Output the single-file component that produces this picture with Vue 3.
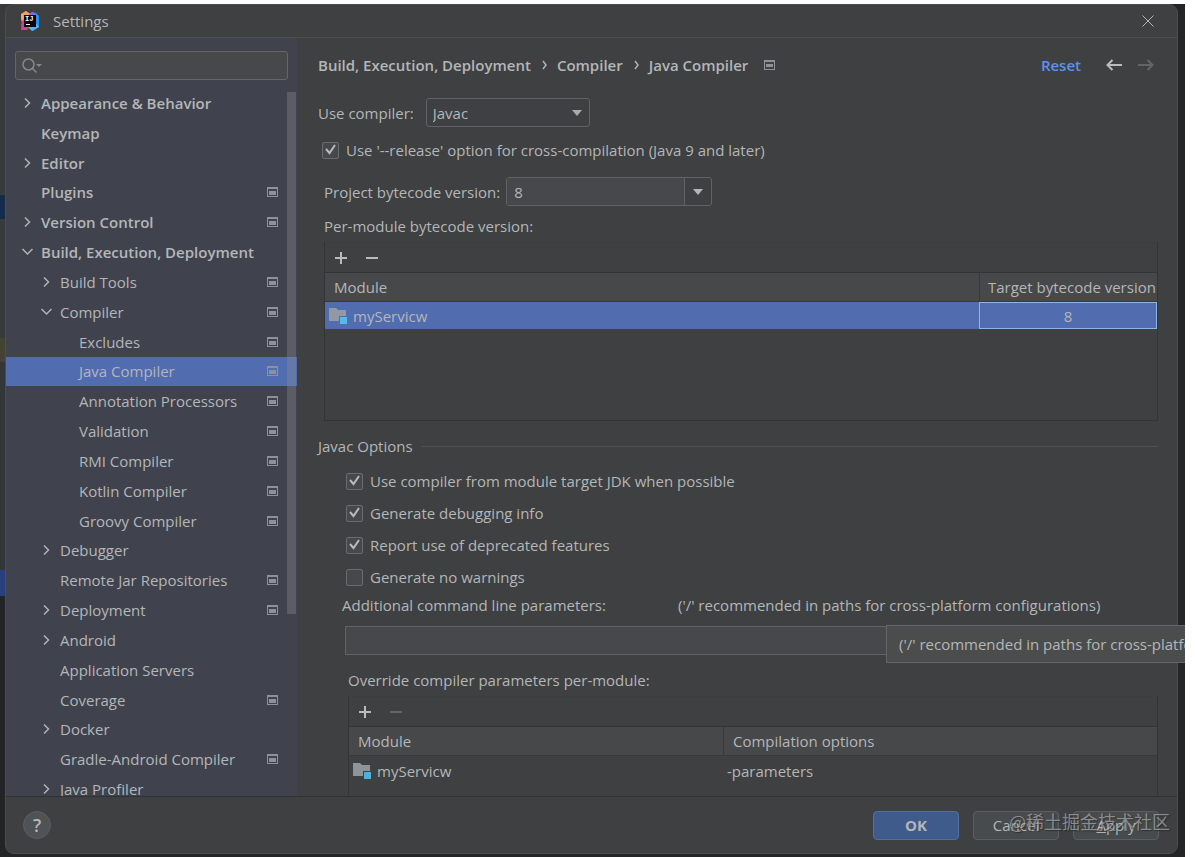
<script setup>
import { ref } from 'vue'

const tree = [
  { label: 'Appearance & Behavior', level: 0, arrow: 'right' },
  { label: 'Keymap', level: 0 },
  { label: 'Editor', level: 0, arrow: 'right' },
  { label: 'Plugins', level: 0, mark: true },
  { label: 'Version Control', level: 0, arrow: 'right', mark: true },
  { label: 'Build, Execution, Deployment', level: 0, arrow: 'down' },
  { label: 'Build Tools', level: 1, arrow: 'right', mark: true },
  { label: 'Compiler', level: 1, arrow: 'down', mark: true },
  { label: 'Excludes', level: 2, mark: true },
  { label: 'Java Compiler', level: 2, mark: true },
  { label: 'Annotation Processors', level: 2, mark: true },
  { label: 'Validation', level: 2, mark: true },
  { label: 'RMI Compiler', level: 2, mark: true },
  { label: 'Kotlin Compiler', level: 2, mark: true },
  { label: 'Groovy Compiler', level: 2, mark: true },
  { label: 'Debugger', level: 1, arrow: 'right' },
  { label: 'Remote Jar Repositories', level: 1, mark: true },
  { label: 'Deployment', level: 1, arrow: 'right', mark: true },
  { label: 'Android', level: 1, arrow: 'right' },
  { label: 'Application Servers', level: 1 },
  { label: 'Coverage', level: 1, mark: true },
  { label: 'Docker', level: 1, arrow: 'right' },
  { label: 'Gradle-Android Compiler', level: 1, mark: true },
  { label: 'Java Profiler', level: 1, arrow: 'right' },
]
const selected = ref('Java Compiler')
const release = ref(true)
const bytecode = ref('8')
const extra = ref('')
const options = ref([
  { label: 'Use compiler from module target JDK when possible', on: true },
  { label: 'Generate debugging info', on: true },
  { label: 'Report use of deprecated features', on: true },
  { label: 'Generate no warnings', on: false },
])
</script>

<template>
  <div class="desktop">
    <div class="dialog">
      <header class="titlebar">
        <svg class="logo" viewBox="0 0 20 20" aria-hidden="true">
          <path d="M1 3 6 0l5 3-1 12-3 4-6 0 1-6-1-4z" fill="#e8476f" />
          <path d="M1 3 6 0l4 3-8 7-1-2z" fill="#f9a45c" />
          <path d="M1 13 4 9l4 7-1 3H2z" fill="#d0409c" />
          <path d="m11 3 5-1 3 3v11l-6 4-6-4z" fill="#2f8df0" />
          <path d="m9 3 3-2 4 1-4 3z" fill="#7d6cf0" />
          <path d="m12 20 7-4-2-3-9 3z" fill="#4fb4f5" />
          <rect x="4" y="4" width="12" height="12" fill="#0b0610" />
          <text x="5" y="10" class="logo-text">IJ</text>
          <path d="M6 13.500h4" stroke="#fff" stroke-width="1" />
        </svg>
        <h1>Settings</h1>
        <button class="icon-btn close" aria-label="Close">
          <svg width="12" height="12" viewBox="0 0 12 12"><path d="m.5.5 11 11m0-11-11 11" class="thin" /></svg>
        </button>
      </header>

      <div class="body">
        <nav class="sidebar" aria-label="Settings categories">
          <div class="search">
            <svg width="20" height="16" viewBox="0 0 20 16" aria-hidden="true">
              <circle cx="6.500" cy="6.500" r="5.500" class="lens" />
              <path d="m10.500 10.500 4 4" class="lens" />
              <path d="M14 6h6l-3 3z" fill="#85888b" />
            </svg>
            <input type="search" aria-label="Search settings" />
          </div>
          <ul class="tree">
            <li v-for="n in tree" :key="n.label">
              <button
                class="node"
                :class="['level-' + n.level, { active: selected === n.label }]"
                @click="selected = n.label"
              >
                <span class="arrow">
                  <svg v-if="n.arrow === 'right'" width="12" height="12" viewBox="0 0 12 12"><path d="m4 1.500 4.500 4.500-4.500 4.500" class="chev" /></svg>
                  <svg v-else-if="n.arrow === 'down'" width="12" height="12" viewBox="0 0 12 12"><path d="m1.500 3 5 5 5-5" class="chev" /></svg>
                </span>
                <span class="name">{{ n.label }}</span>
                <svg v-if="n.mark" class="mark" width="11" height="10" viewBox="0 0 11 10"><path d="M0 0h11v10H0zM1 2v7h9V2z" fill-rule="evenodd" /><path d="M2 4h7v4H2z" /></svg>
              </button>
            </li>
          </ul>
          <div class="thumb"></div>
        </nav>

        <main class="content">
          <div class="crumbs">
            <b>Build, Execution, Deployment</b>
            <svg width="6" height="10" viewBox="0 0 6 10"><path d="m1 1 3 4-3 4" class="chev" /></svg>
            <b>Compiler</b>
            <svg width="6" height="10" viewBox="0 0 6 10"><path d="m1 1 3 4-3 4" class="chev" /></svg>
            <b>Java Compiler</b>
            <svg class="mark crumb-mark" width="11" height="10" viewBox="0 0 11 10"><path d="M0 0h11v10H0zM1 2v7h9V2z" fill-rule="evenodd" /><path d="M2 4h7v3H2z" /></svg>
            <a href="#" class="reset">Reset</a>
            <button class="icon-btn" aria-label="Back">
              <svg width="16" height="12" viewBox="0 0 16 12"><path d="M6.500 1 1.500 6l5 5M2 6h14" class="bold" /></svg>
            </button>
            <button class="icon-btn" aria-label="Forward" disabled>
              <svg width="16" height="12" viewBox="0 0 16 12"><path d="m9.500 1 5 5-5 5M14 6H0" class="bold" /></svg>
            </button>
          </div>

          <div class="line compiler">
            <label for="compiler">Use compiler:</label>
            <div class="select">
              <select id="compiler"><option>Javac</option><option>Eclipse</option></select>
              <svg width="10" height="6" viewBox="0 0 10 6"><path d="M0 0h10L5 6z" fill="#a9abad" /></svg>
            </div>
          </div>

          <label class="check release">
            <input v-model="release" type="checkbox" />
            <svg class="tick" viewBox="0 0 17 17"><path d="m4 8 3.500 4L13 4" /></svg>
            <span>Use '--release' option for cross-compilation (Java 9 and later)</span>
          </label>

          <div class="line project">
            <label for="bytecode">Project bytecode version:</label>
            <div class="combo">
              <input id="bytecode" v-model="bytecode" type="text" />
              <button aria-label="Choose version">
                <svg width="10" height="6" viewBox="0 0 10 6"><path d="M0 0h10L5 6z" fill="#b4b6b8" /></svg>
              </button>
            </div>
          </div>

          <p class="caption">Per-module bytecode version:</p>
          <section class="box first">
            <div class="tools">
              <button class="icon-btn" aria-label="Add module"><svg width="12" height="12" viewBox="0 0 12 12"><path d="M6 0v12M0 6h12" class="bold" /></svg></button>
              <button class="icon-btn" aria-label="Remove module"><svg width="12" height="12" viewBox="0 0 12 12"><path d="M0 6h12" class="bold" /></svg></button>
            </div>
            <table>
              <thead><tr><th>Module</th><th class="target">Target bytecode version</th></tr></thead>
              <tbody>
                <tr class="picked">
                  <td>
                    <span class="module">
                      <svg width="19" height="17" viewBox="0 0 19 17"><path d="M0 1h7l2 2h8v6h-7v5H0z" fill="#9299a3" /><path d="M11 10h7v7h-7z" fill="#55b9ea" /></svg>
                      myServicw
                    </span>
                  </td>
                  <td class="value">8</td>
                </tr>
              </tbody>
            </table>
          </section>

          <h2>Javac Options</h2>
          <div class="options">
            <label v-for="o in options" :key="o.label" class="check">
              <input v-model="o.on" type="checkbox" />
              <svg class="tick" viewBox="0 0 17 17"><path d="m4 8 3.500 4L13 4" /></svg>
              <span>{{ o.label }}</span>
            </label>
          </div>

          <div class="params">
            <label for="extra">Additional command line parameters:</label>
            <span>('/' recommended in paths for cross-platform configurations)</span>
          </div>
          <div class="extra">
            <input id="extra" v-model="extra" type="text" />
            <div class="tooltip" role="tooltip">('/' recommended in paths for cross-platform configurations)</div>
          </div>

          <p class="caption override">Override compiler parameters per-module:</p>
          <section class="box second">
            <div class="tools">
              <button class="icon-btn" aria-label="Add override"><svg width="12" height="12" viewBox="0 0 12 12"><path d="M6 0v12M0 6h12" class="bold" /></svg></button>
              <button class="icon-btn" aria-label="Remove override" disabled><svg width="12" height="12" viewBox="0 0 12 12"><path d="M0 6h12" class="bold" /></svg></button>
            </div>
            <table>
              <thead><tr><th class="mod">Module</th><th>Compilation options</th></tr></thead>
              <tbody>
                <tr>
                  <td>
                    <span class="module">
                      <svg width="19" height="17" viewBox="0 0 19 17"><path d="M0 1h7l2 2h8v6h-7v5H0z" fill="#8f949b" /><path d="M11 10h7v7h-7z" fill="#4fb0d8" /></svg>
                      myServicw
                    </span>
                  </td>
                  <td>-parameters</td>
                </tr>
              </tbody>
            </table>
          </section>
        </main>
      </div>

      <footer class="footer">
        <button class="help" aria-label="Help">?</button>
        <button class="btn primary">OK</button>
        <button class="btn">Cancel</button>
        <button class="btn"><u>A</u>pply</button>
      </footer>
    </div>
    <div class="watermark">@稀土掘金技术社区</div>
  </div>
</template>

<style>
body {
  margin: 0;
  background: #fff;
}
</style>

<style scoped>
* {
  box-sizing: border-box;
}
.desktop {
  position: relative;
  height: calc(100vh - 4px);
  margin: 4px 10px 0 0;
  padding: 0 7px 3px 5px;
  overflow: hidden;
  background:
    linear-gradient(#383b3b 191px, #142c4c 191px 215px, #383b3b 215px 334px, #444232 334px 358px, #343738 358px 566px, #2a3f80 566px 592px, #232425 592px) 0 0 / 5px 100% no-repeat,
    linear-gradient(90deg, #383b3b 120px, #242526 320px) 0 0 / 400px 10px no-repeat,
    #242526;
  font-family: "Open Sans", "Noto Sans", "Noto Sans CJK SC", sans-serif;
  font-size: 15px;
  line-height: 20px;
  color: #b4b6b8;
}
button,
input,
select {
  font: inherit;
  color: inherit;
  margin: 0;
}
.dialog {
  display: flex;
  flex-direction: column;
  height: 100%;
  border: 1px solid #4b4d4e;
  border-radius: 9px;
  background: #3e4041;
}
.titlebar {
  display: flex;
  flex: none;
  align-items: center;
  height: 33px;
  padding: 0 23px 0 14px;
  border-bottom: 1px solid #4b4d4f;
}
.logo {
  width: 20px;
  height: 20px;
}
.logo-text {
  font: bold 7px "Liberation Mono", monospace;
  fill: #fff;
}
h1 {
  flex: 1;
  margin: 0 0 0 13px;
  font-size: 15px;
  font-weight: 400;
}
.icon-btn {
  display: flex;
  padding: 0;
  border: 0;
  background: none;
}
.icon-btn:disabled {
  opacity: 0.3;
}
.thin {
  fill: none;
  stroke: #b4b6b8;
  stroke-width: 1;
}
.bold {
  fill: none;
  stroke: #b9bbbd;
  stroke-width: 2;
}
.chev {
  fill: none;
  stroke: #b0b2b5;
  stroke-width: 1.5;
}
.lens {
  fill: none;
  stroke: #85888b;
  stroke-width: 1.5;
}
.body {
  display: flex;
  flex: 1;
  min-height: 0;
}
.sidebar {
  position: relative;
  flex: 0 0 291px;
  overflow: hidden;
  padding-top: 13px;
  background: #40434e;
}
.search {
  display: flex;
  align-items: center;
  height: 29px;
  margin: 0 9px 8px;
  padding-left: 6px;
  border: 1px solid #626569;
  border-radius: 3px;
  background: #46484a;
}
.search input {
  flex: 1;
  min-width: 0;
  border: 0;
  outline: 0;
  background: none;
}
.tree {
  display: grid;
  grid-auto-rows: 1fr;
  height: 716px;
  margin: 0;
  padding: 0;
  list-style: none;
}
.node {
  display: flex;
  align-items: center;
  width: 100%;
  height: 100%;
  padding: 0 19px 0 15px;
  border: 0;
  background: none;
  text-align: left;
}
.level-0 {
  font-weight: 600;
}
.level-1 {
  padding-left: 34px;
}
.level-2 {
  padding-left: 53px;
}
.active {
  background: #526cb0;
}
.arrow {
  display: flex;
  width: 20px;
}
.name {
  flex: 1;
  white-space: nowrap;
}
.mark {
  fill: #8e9198;
}
.thumb {
  position: absolute;
  top: 54px;
  right: 1px;
  width: 9px;
  height: 522px;
  background: rgba(140, 142, 145, 0.35);
}
.content {
  flex: 1;
  min-width: 0;
  overflow-x: visible;
  overflow-y: clip;
  padding: 17px 19px 0 21px;
}
.crumbs {
  display: flex;
  align-items: center;
  height: 20px;
  white-space: nowrap;
}
.crumbs b,
.reset {
  font-weight: 600;
}
.crumbs b + svg {
  margin: 0 9px 0 11px;
}
.crumbs b + .crumb-mark {
  margin: 0 0 0 16px;
}
.reset {
  margin: 0 9px 0 auto;
  color: #5c92ee;
  text-decoration: none;
}
.crumbs .icon-btn {
  margin-left: 16px;
}
.crumbs .icon-btn:last-child {
  margin-right: 4px;
}
.line {
  display: flex;
  align-items: center;
}
.compiler {
  gap: 12px;
  margin-top: 23px;
}
.select {
  position: relative;
  width: 164px;
}
.select select {
  display: block;
  width: 100%;
  height: 29px;
  padding: 0 6px;
  appearance: none;
  border: 1px solid #606365;
  border-radius: 3px;
  background: #3e4041;
}
.select svg {
  position: absolute;
  right: 8px;
  top: 12px;
  pointer-events: none;
}
.check {
  position: relative;
  display: flex;
  align-items: center;
  gap: 7px;
  height: 20px;
}
.check input {
  width: 17px;
  height: 17px;
  appearance: none;
  border: 1px solid #696c6e;
  border-radius: 2px;
  background: #45494a;
}
.tick {
  position: absolute;
  left: 0;
  top: 1px;
  width: 17px;
  height: 17px;
  visibility: hidden;
  pointer-events: none;
}
.check input:checked + .tick {
  visibility: visible;
}
.tick path {
  fill: none;
  stroke: #b9bbbd;
  stroke-width: 2;
}
.release {
  margin: 13px 0 0 4px;
}
.project {
  gap: 6px;
  margin: 17px 0 0 6px;
}
.combo {
  display: flex;
  width: 206px;
  height: 29px;
  border: 1px solid #606365;
  border-radius: 3px;
}
.combo input {
  flex: 1;
  min-width: 0;
  padding: 0 7px;
  border: 0;
  outline: 0;
  background: #46484a;
}
.combo button {
  display: flex;
  align-items: center;
  justify-content: center;
  width: 27px;
  padding: 0;
  border: 0;
  border-left: 1px solid #606365;
  background: none;
}
.caption {
  margin: 10px 0 0 6px;
}
.box {
  border: 1px solid #323435;
  border-top-color: #3b3d3e;
}
.first {
  height: 179px;
  margin: 6px 0 0 6px;
}
.second {
  height: 130px;
  margin: 6px 0 0 30px;
}
.tools {
  display: flex;
  align-items: center;
  gap: 19px;
  height: 29px;
  padding-left: 10px;
}
table {
  width: 100%;
  table-layout: fixed;
  border-collapse: separate;
  border-spacing: 0;
}
th {
  height: 30px;
  padding: 0 9px;
  border-top: 1px solid #323435;
  border-bottom: 1px solid #38393b;
  background: #47484a;
  font-weight: 400;
  text-align: left;
  white-space: nowrap;
}
th + th {
  border-left: 1px solid #38393b;
}
.target {
  width: 178px;
  padding: 0 0 0 8px;
}
.mod {
  width: 374px;
}
td {
  height: 27px;
  padding: 0 4px;
}
.second td {
  height: 29px;
}
.picked td {
  background: #526cb0;
}
.picked .value {
  border: 1px solid #8fb4e8;
  text-align: center;
}
.module {
  display: flex;
  align-items: center;
  gap: 5px;
}
h2 {
  display: flex;
  align-items: center;
  gap: 8px;
  margin: 15px 0 0;
  font-size: 15px;
  font-weight: 400;
}
h2::after {
  content: "";
  flex: 1;
  height: 1px;
  background: #4d4f51;
}
.options {
  display: grid;
  gap: 12px;
  margin: 15px 0 0 28px;
}
.params {
  display: flex;
  gap: 72px;
  margin: 8px 0 0 24px;
  white-space: nowrap;
}
.extra {
  position: relative;
  margin: 11px 0 0 27px;
}
.extra input {
  display: block;
  width: 100%;
  height: 29px;
  border: 1px solid #606365;
  background: #46484a;
}
.tooltip {
  position: absolute;
  left: 541px;
  top: -1px;
  z-index: 2;
  height: 38px;
  padding: 8px 12px;
  border: 1px solid #636668;
  background: #4b4d4d;
  white-space: nowrap;
}
.override {
  margin: 15px 0 0 30px;
}
.footer {
  display: flex;
  flex: none;
  align-items: center;
  gap: 14px;
  height: 57px;
  padding: 0 18px 0 17px;
  border-top: 1px solid #303233;
}
.help {
  width: 28px;
  height: 28px;
  margin-right: auto;
  padding: 0;
  border: 1px solid #5b5e60;
  border-radius: 50%;
  background: #505355;
  font-size: 18px;
  font-weight: 600;
}
.btn {
  width: 86px;
  height: 29px;
  padding: 0;
  border: 1px solid #5b5e60;
  border-radius: 4px;
  background: #484b4d;
}
.primary {
  border-color: #4f6f9f;
  background: #3f5b8b;
  font-weight: 700;
}
.watermark {
  position: absolute;
  right: 15px;
  bottom: 23px;
  z-index: 3;
  color: rgba(190, 192, 194, 0.6);
  font-family: "Noto Sans CJK SC", sans-serif;
  font-size: 18px;
  line-height: 26px;
  text-shadow: 1px 1px 1px rgba(30, 30, 30, 0.6);
  pointer-events: none;
}
</style>
